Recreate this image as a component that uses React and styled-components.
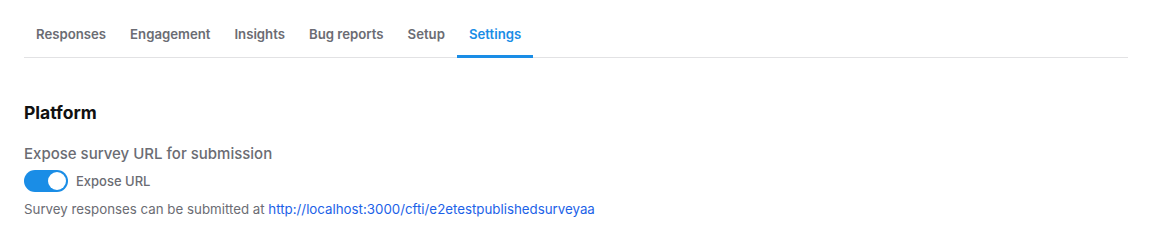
import React, { useState } from 'react';
import styled, { createGlobalStyle } from 'styled-components';

const GlobalStyle = createGlobalStyle`
  body {
    margin: 0;
    background: #fff;
    font-family: Inter, "Noto Sans", sans-serif;
  }
`;

const Page = styled.div`
  padding: 0 24px;
`;

const TabBar = styled.div`
  display: flex;
  border-bottom: 1px solid #e2e2e4;
  padding-top: 12px;
`;

const Tab = styled.div`
  padding: 0 12px;
  height: 43px;
  display: flex;
  align-items: center;
  font-size: 13.2px;
  font-weight: 600;
  color: ${(p) => (p.$active ? '#1a8de6' : '#6b6c73')};
  border-bottom: 3px solid ${(p) => (p.$active ? '#1a8de6' : 'transparent')};
  margin-bottom: -1px;
  cursor: pointer;
`;

const Section = styled.div`
  padding-top: 43px;
`;

const Heading = styled.h2`
  margin: 0;
  font-size: 17.5px;
  font-weight: 700;
  color: #111;
  line-height: 24px;
`;

const Label = styled.div`
  margin-top: 19px;
  font-size: 15px;
  font-weight: 500;
  color: #6b6c73;
  line-height: 20px;
`;

const ToggleRow = styled.label`
  display: flex;
  align-items: center;
  gap: 8px;
  margin-top: 6px;
  cursor: pointer;
`;

const Track = styled.span`
  position: relative;
  width: 44px;
  height: 22px;
  border-radius: 11px;
  background: ${(p) => (p.$on ? '#1a8de6' : '#c9cacf')};
  display: inline-block;
`;

const Knob = styled.span`
  position: absolute;
  top: 2px;
  left: ${(p) => (p.$on ? '24px' : '2px')};
  width: 18px;
  height: 18px;
  border-radius: 50%;
  background: #fff;
`;

const ToggleText = styled.span`
  font-size: 13px;
  font-weight: 500;
  color: #6b6c73;
`;

const Note = styled.div`
  margin-top: 8px;
  font-size: 13.3px;
  color: #6b6c73;
  line-height: 18px;
`;

const Link = styled.a`
  color: #1c62e8;
  text-decoration: none;
`;

const tabs = ['Responses', 'Engagement', 'Insights', 'Bug reports', 'Setup', 'Settings'];

export default function App() {
  const [on, setOn] = useState(true);
  return (
    <Page>
      <GlobalStyle />
      <TabBar>
        {tabs.map((t) => (
          <Tab key={t} $active={t === 'Settings'}>{t}</Tab>
        ))}
      </TabBar>
      <Section>
        <Heading>Platform</Heading>
        <Label>Expose survey URL for submission</Label>
        <ToggleRow onClick={() => setOn(!on)}>
          <Track $on={on}><Knob $on={on} /></Track>
          <ToggleText>Expose URL</ToggleText>
        </ToggleRow>
        <Note>
          Survey responses can be submitted at{' '}
          <Link href="#">http://localhost:3000/cfti/e2etestpublishedsurveyaa</Link>
        </Note>
      </Section>
    </Page>
  );
}
